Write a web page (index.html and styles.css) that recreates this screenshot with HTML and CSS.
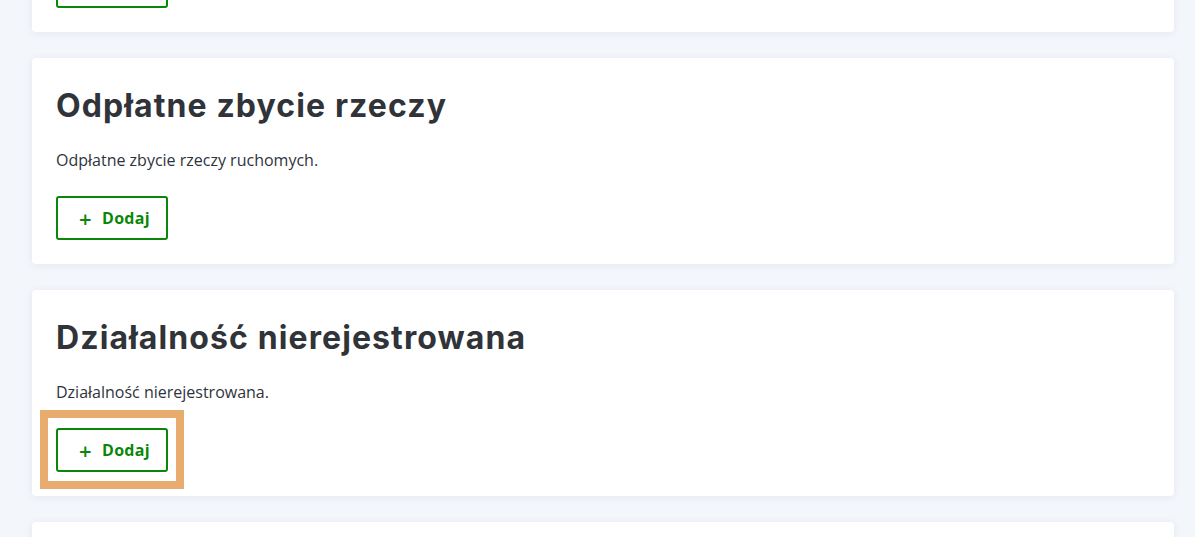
FILE: index.html
```html
<!DOCTYPE html>
<html lang="pl">
<head>
<meta charset="utf-8">
<title>Przychody</title>
<link rel="stylesheet" href="styles.css">
</head>
<body>
<main class="list">
  <section class="card">
    <h2 class="card-title">Sprzedaż papierów wartościowych</h2>
    <p class="card-text">Sprzedaż papierów wartościowych.</p>
    <button class="btn-add" type="button"><span class="plus">+</span>Dodaj</button>
  </section>
  <section class="card">
    <h2 class="card-title">Odpłatne zbycie rzeczy</h2>
    <p class="card-text">Odpłatne zbycie rzeczy ruchomych.</p>
    <button class="btn-add" type="button"><span class="plus">+</span>Dodaj</button>
  </section>
  <section class="card">
    <h2 class="card-title">Działalność nierejestrowana</h2>
    <p class="card-text">Działalność nierejestrowana.</p>
    <div class="btn-wrap">
      <button class="btn-add" type="button"><span class="plus">+</span>Dodaj</button>
      <span class="highlight"></span>
    </div>
  </section>
  <section class="card">
    <h2 class="card-title">Inne przychody</h2>
    <p class="card-text">Inne przychody.</p>
    <button class="btn-add" type="button"><span class="plus">+</span>Dodaj</button>
  </section>
</main>
</body>
</html>
```
FILE: styles.css
```css
html, body {
  margin: 0;
  padding: 0;
}
body {
  background: #f3f6fb;
  font-family: "Open Sans", "Noto Sans", sans-serif;
  color: #33373d;
  overflow: hidden;
  height: 537px;
}
.list {
  display: flex;
  flex-direction: column;
  gap: 26px;
  padding: 0 21px 0 32px;
  margin-top: -174px;
}
.card {
  background: #fff;
  border-radius: 4px;
  box-shadow: 0 1px 8px rgba(30, 40, 70, 0.07);
  padding: 28px 24px 24px;
  height: 206px;
  box-sizing: border-box;
  display: flex;
  flex-direction: column;
  align-items: flex-start;
}
.card-title {
  margin: 0;
  font-family: "Inter", "DejaVu Sans", sans-serif;
  font-weight: 700;
  font-size: 32px;
  letter-spacing: 1.1px;
  line-height: 40px;
  color: #303338;
}
.card-text {
  margin: 22px 0 24px;
  font-size: 16px;
  line-height: 24px;
  color: #2f343c;
}
.btn-wrap {
  position: relative;
}
.btn-add {
  display: flex;
  align-items: center;
  justify-content: center;
  width: 112px;
  height: 44px;
  box-sizing: border-box;
  background: #fff;
  border: 2px solid #0a870a;
  border-radius: 3px;
  color: #0a870a;
  font-family: "Open Sans", "Noto Sans", sans-serif;
  font-weight: 700;
  font-size: 16px;
  letter-spacing: 0.3px;
  padding: 0 0 0 5px;
  cursor: pointer;
}
.plus {
  font-size: 22px;
  font-weight: 600;
  margin-right: 10px;
  line-height: 1;
}
.highlight {
  position: absolute;
  left: -16px;
  top: -18px;
  width: 144px;
  height: 79px;
  box-sizing: border-box;
  border: 8px solid #e8ad6e;
  pointer-events: none;
}
```
